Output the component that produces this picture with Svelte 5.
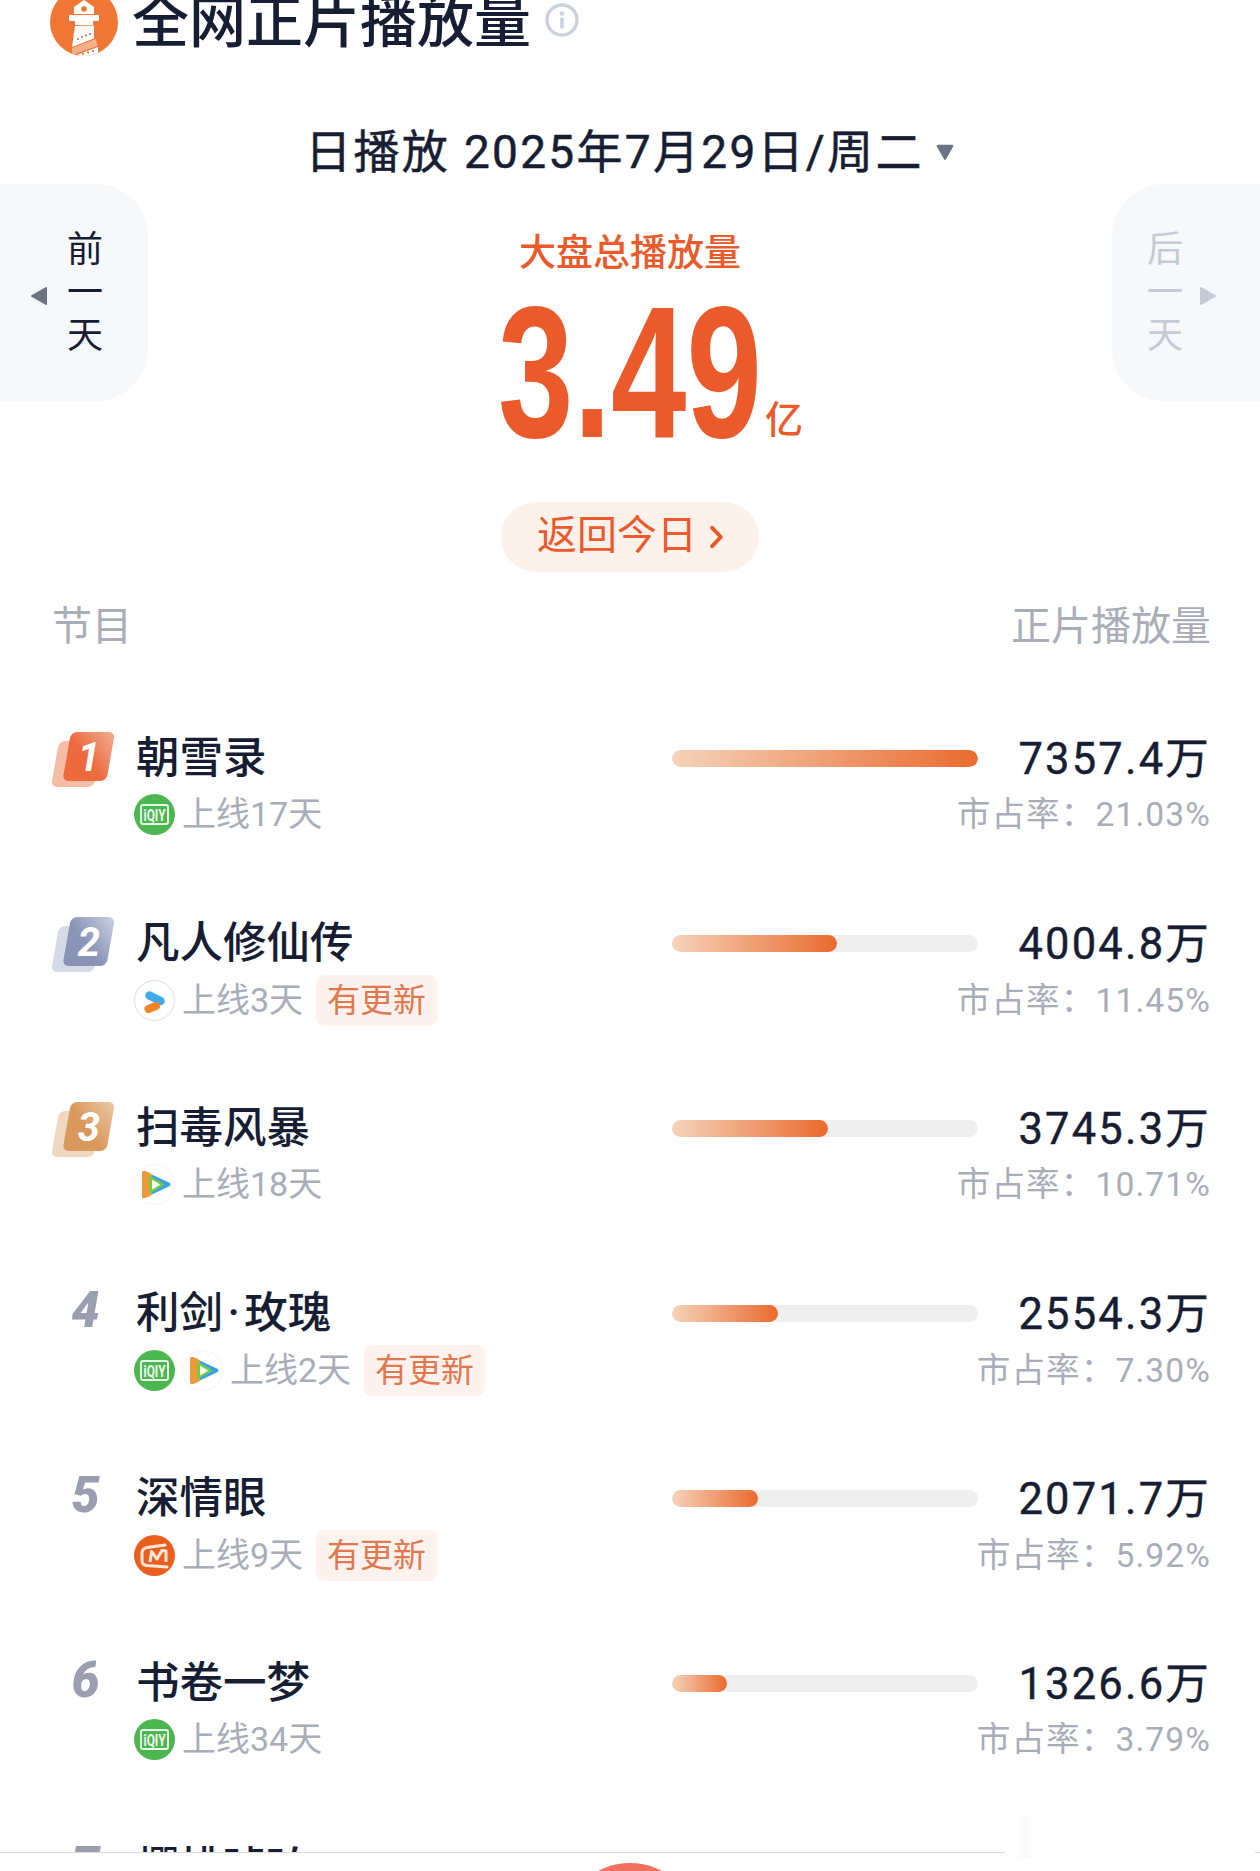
<script>
  const rows = [
    { name: '朝雪录', days: '上线17天', pf: ['iq'], tag: false, pct: 100, val: '7357.4万', share: '21.03%' },
    { name: '凡人修仙传', days: '上线3天', pf: ['yk'], tag: true, pct: 54, val: '4004.8万', share: '11.45%' },
    { name: '扫毒风暴', days: '上线18天', pf: ['tx'], tag: false, pct: 51, val: '3745.3万', share: '10.71%' },
    { name: '利剑\u200A·\u200A玫瑰', days: '上线2天', pf: ['iq', 'tx'], tag: true, pct: 34.7, val: '2554.3万', share: '7.30%' },
    { name: '深情眼', days: '上线9天', pf: ['mg'], tag: true, pct: 28, val: '2071.7万', share: '5.92%' },
    { name: '书卷一梦', days: '上线34天', pf: ['iq'], tag: false, pct: 18, val: '1326.6万', share: '3.79%' },
    { name: '樱桃琥珀', days: '上线30天', pf: ['iq'], tag: false, pct: 15, val: '1200.0万', share: '3.40%' }
  ];
  const medals = [
    { a: '#ec6a3e', b: '#f2b097', back: '#f5bca6' },
    { a: '#8a94b6', b: '#cdd3e3', back: '#d6dae7' },
    { a: '#d9985c', b: '#eccaa6', back: '#f0d8c0' }
  ];
</script>

{#snippet platform(p)}
  <svg class="pf" viewBox="0 0 41 41">
    {#if p === 'iq'}
      <circle cx="20.5" cy="20.5" r="20.5" fill="#4cb751" />
      <path d="M9 11h23a2 2 0 0 1 2 2v15a2 2 0 0 1-2 2H9a2 2 0 0 1-2-2V13a2 2 0 0 1 2-2z" fill="none" stroke="#e9f6ea" stroke-width="2" />
      <text x="20.5" y="26.5" class="iqt" textLength="22" lengthAdjust="spacingAndGlyphs">iQIY</text>
    {:else if p === 'yk'}
      <circle cx="20.5" cy="20.5" r="20" fill="#fff" stroke="#dcdcdc" />
      <path d="M15.5 15.5l11 5.5" stroke="#41a9ee" stroke-width="8.5" stroke-linecap="round" fill="none" />
      <path d="M14.5 29l7.5-3" stroke="#ef8426" stroke-width="8" stroke-linecap="round" fill="none" />
    {:else if p === 'tx'}
      <circle cx="20.5" cy="20.5" r="20" fill="#fff" stroke="#f3f3f3" />
      <path d="M10 9l24.5 11.5L10 32z" fill="#3aa2e2" stroke="#3aa2e2" stroke-width="4" stroke-linejoin="round" />
      <path d="M10 9q5 1 6 3v17q-1 2-6 3z" fill="#ee9a3a" stroke="#ee9a3a" stroke-width="4" stroke-linejoin="round" />
      <path d="M15.5 12l14.5 8.5L15.5 29z" fill="#78c84a" stroke="#78c84a" stroke-linejoin="round" />
      <path d="M18.5 16.5l7 4-7 4.5z" fill="#f6fbea" stroke="#f6fbea" stroke-linejoin="round" />
    {:else}
      <circle cx="20.5" cy="20.5" r="20.5" fill="#ea5f20" />
      <path d="M31 10L13 12.5Q8 13.5 8 18.5V26Q8 30 13 30.5L33 32" fill="none" stroke="#fbe7d8" stroke-width="3" stroke-linecap="round" />
      <path d="M16 27L17.5 16.5L23 24L28 15.5L32 16V27" fill="none" stroke="#fbe7d8" stroke-width="3" stroke-linejoin="round" />
    {/if}
  </svg>
{/snippet}

<div class="page">
  <header class="head">
    <svg class="logo" viewBox="0 0 68 68">
      <defs><clipPath id="lc"><circle cx="34" cy="34" r="34" /></clipPath></defs>
      <g clip-path="url(#lc)">
        <rect width="68" height="68" fill="#ef7735" />
        <path d="M24 26V19l10-7 10 7v7z" fill="#fff" />
        <circle cx="34" cy="21" r="2.8" fill="#ef7735" />
        <rect x="19" y="27" width="30" height="6" rx="1" fill="#fff" />
        <rect x="25" y="33" width="18" height="4" fill="#fff" />
        <path d="M25 38l19-0.5v13L22 59z" fill="#fff" />
        <path d="M22 60l24-9 1.5 7L22 67z" fill="#f3b08a" />
        <path d="M24 68l24-9 0 9z" fill="#fff" />
        <g fill="#a8785c"><circle cx="28" cy="51" r="1.1" /><circle cx="32" cy="49" r="1.1" /><circle cx="36" cy="47.5" r="1.1" /><circle cx="40" cy="46" r="1.1" /><circle cx="33" cy="66" r="1.1" /><circle cx="38" cy="64.5" r="1.1" /><circle cx="43" cy="63" r="1.1" /></g>
      </g>
    </svg>
    <h1>全网正片播放量</h1>
    <svg class="info" viewBox="0 0 34 34">
      <circle cx="17" cy="17" r="15" fill="none" stroke="#ccd1db" stroke-width="3.4" />
      <circle cx="17" cy="10.5" r="2.2" fill="#ccd1db" />
      <rect x="15.2" y="14.5" width="3.6" height="11" rx="1" fill="#ccd1db" />
    </svg>
  </header>

  <div class="date">
    <span>日播放 2025年7月29日/周二</span>
    <svg class="caret" viewBox="0 0 18 16"><path d="M2.5 2.5h13L9 14z" fill="#6b7484" stroke="#6b7484" stroke-width="2" stroke-linejoin="round" /></svg>
  </div>

  <section class="hero">
    <div class="nav prev">
      <svg class="arrow" viewBox="0 0 18 20"><path d="M16 2v16L2 10z" fill="#6b7484" stroke="#6b7484" stroke-width="2" stroke-linejoin="round" /></svg>
      <div class="vert"><span>前</span><span>一</span><span>天</span></div>
    </div>
    <div class="mid">
      <div class="label">大盘总播放量</div>
      <div class="total"><span class="digits">3.49</span><span class="unit">亿</span></div>
      <div class="back"><span class="backt">返回今日</span><svg viewBox="0 0 12 22"><path d="M2 2.5L10 11l-8 8.5" fill="none" stroke="#ea5a2b" stroke-width="3.6" stroke-linecap="round" stroke-linejoin="round" /></svg></div>
    </div>
    <div class="nav next">
      <div class="vert"><span>后</span><span>一</span><span>天</span></div>
      <svg class="arrow" viewBox="0 0 18 20"><path d="M2 2v16l14-8z" fill="#c5cbd6" stroke="#c5cbd6" stroke-width="2" stroke-linejoin="round" /></svg>
    </div>
  </section>

  <div class="thead"><span>节目</span><span>正片播放量</span></div>

  <div class="list">
    {#each rows as r, i}
      <div class="row">
        <div class="rank">
          {#if i < 3}
            <svg class="medal" viewBox="0 0 70 60">
              <defs>
                <linearGradient id="m{i}" x1="0" y1="1" x2="1" y2="0">
                  <stop offset="0" stop-color={medals[i].a} /><stop offset="0.45" stop-color={medals[i].a} /><stop offset="1" stop-color={medals[i].b} />
                </linearGradient>
              </defs>
              <rect x="12" y="11" width="43" height="46" rx="6" fill={medals[i].back} transform="skewX(-10)" />
              <rect x="22.4" y="2" width="44" height="49" rx="6" fill="url(#m{i})" transform="skewX(-10)" />
              <text x="40" y="41" class="mnum">{i + 1}</text>
            </svg>
          {:else}
            <span class="plain">{i + 1}</span>
          {/if}
        </div>
        <div class="name">{r.name}</div>
        <div class="bar"><div class="fill" style="width:{r.pct}%"></div></div>
        <div class="val">{r.val}</div>
        <div class="sub" class:tagged={r.tag}>
          {#each r.pf as p}{@render platform(p)}{/each}
          <span class="days">{r.days}</span>
          {#if r.tag}<span class="tag">有更新</span>{/if}
        </div>
        <div class="share" class:tagged={r.tag}>市占率：{r.share}</div>
      </div>
    {/each}
  </div>

  <div class="mark"></div>
  <footer class="foot"><div class="fab"></div></footer>
</div>

<style>
  :global(body) { margin: 0; background: #fff; }
  .page {
    position: relative;
    width: 1260px;
    height: 1871px;
    overflow: hidden;
    background: #fff;
    color: #171d33;
    font-family: Roboto, "Noto Sans CJK SC", sans-serif;
  }
  .head {
    display: flex;
    align-items: center;
    height: 88px;
    margin-top: -22px;
    padding-left: 50px;
  }
  .logo { width: 68px; height: 68px; flex: none; }
  h1 {
    margin: 2px 0 0 14px;
    font-size: 57px;
    line-height: 60px;
    font-weight: 500;
    white-space: nowrap;
  }
  .info { width: 34px; height: 34px; margin: -4px 0 0 14px; }
  .date {
    display: flex;
    align-items: center;
    justify-content: center;
    height: 60px;
    margin-top: 56px;
    font-size: 46px;
    line-height: 60px;
    font-weight: 400;
    letter-spacing: 2.3px;
    -webkit-text-stroke: 0.5px #171d33;
    white-space: nowrap;
  }
  .caret { width: 20px; height: 18px; margin-left: 11px; }
  .hero {
    display: grid;
    grid-template-columns: 148px 1fr 148px;
    align-items: start;
    margin-top: 2px;
  }
  .nav {
    display: flex;
    align-items: center;
    height: 217px;
    background: #f6f8fa;
    box-sizing: border-box;
  }
  .prev { border-radius: 0 52px 52px 0; padding-left: 30px; gap: 19px; }
  .next { border-radius: 52px 0 0 52px; padding-left: 35px; gap: 16px; color: #c5cbd6; }
  .arrow { width: 18px; height: 20px; flex: none; margin-top: 7px; }
  .vert { display: flex; flex-direction: column; align-items: center; margin-top: 2px; font-size: 36px; line-height: 43px; }
  .mid { display: flex; flex-direction: column; align-items: center; padding-top: 48px; }
  .label { font-size: 37px; line-height: 44px; font-weight: 500; color: #ea5a2b; white-space: nowrap; }
  .total {
    display: flex;
    align-items: flex-end;
    height: 135px;
    margin: 28px 0 0 44px;
    color: #ea5a2b;
  }
  .digits {
    display: block;
    width: 257px;
    font-family: "Liberation Sans", Roboto, sans-serif;
    font-size: 187px;
    line-height: 135px;
    font-weight: 700;
    transform: translate(-3px, 1px) scaleX(0.725);
    transform-origin: left center;
    white-space: nowrap;
  }
  .unit { font-size: 38px; line-height: 44px; margin: 0 0 -3px 7px; font-weight: 500; }
  .back {
    display: flex;
    align-items: center;
    justify-content: center;
    gap: 13px;
    width: 258px;
    height: 70px;
    margin-top: 63px;
    border-radius: 35px;
    background: #fdf1ec;
    color: #ea5a2b;
    font-size: 40px;
  }
  .backt { line-height: 64px; height: 64px; margin-top: -3px; }
  .back svg { width: 13px; height: 24px; }
  .thead {
    display: flex;
    justify-content: space-between;
    height: 50px;
    margin-top: 30px;
    padding: 0 49px 0 52px;
    font-size: 40px;
    line-height: 50px;
    color: #a9adb8;
  }
  .list { margin-top: 80.5px; }
  .row {
    display: grid;
    grid-template-columns: 84px 536px 306px 1fr;
    grid-template-rows: 52px auto;
    row-gap: 9px;
    align-items: center;
    height: 185px;
    align-content: start;
    box-sizing: border-box;
    padding: 0 49px 0 52px;
  }
  .rank { grid-row: 1; grid-column: 1; height: 52px; position: relative; }
  .medal { display: block; width: 70px; height: 60px; margin: -3px 0 0 -3px; }
  .mnum {
    font: italic 700 40px Roboto, sans-serif;
    fill: #fff;
    text-anchor: middle;
  }
  .plain {
    display: block;
    width: 66px;
    padding-left: 1px;
    box-sizing: border-box;
    text-align: center;
    font-size: 50px;
    line-height: 44px;
    font-weight: 900;
    font-style: italic;
    color: #9a9eae;
  }
  .name { grid-row: 1; grid-column: 2; font-size: 43.5px; line-height: 52px; font-weight: 500; white-space: nowrap; }
  .bar { grid-row: 1; grid-column: 3; height: 17px; border-radius: 9px; background: #efefef; overflow: hidden; }
  .fill { height: 100%; border-radius: 9px; background: linear-gradient(90deg, #f5d3ba, #ea6a2e); }
  .val {
    grid-row: 1;
    grid-column: 4;
    position: relative;
    top: 1px;
    text-align: right;
    font-size: 43.5px;
    line-height: 52px;
    font-weight: 400;
    letter-spacing: 2.2px;
    -webkit-text-stroke: 0.4px #171d33;
    white-space: nowrap;
  }
  .sub {
    grid-row: 2;
    grid-column: 2 / 4;
    display: flex;
    align-items: center;
    gap: 7px;
    height: 41px;
    margin-left: -2px;
  }
  .pf { width: 41px; height: 41px; flex: none; }
  .iqt { font: 700 16px Roboto, sans-serif; fill: #eef8ef; text-anchor: middle; }
  .days { font-size: 34px; line-height: 41px; color: #a9adb8; white-space: nowrap; }
  .tag {
    margin-left: 6px;
    padding: 0 11px;
    height: 51px;
    flex: none;
    border-radius: 8px;
    background: #fdf2ed;
    color: #e0794f;
    font-size: 33px;
    line-height: 51px;
  }
  .tagged { position: relative; top: 1px; }
  .share {
    grid-row: 2;
    grid-column: 3 / 5;
    text-align: right;
    font-size: 33.6px;
    line-height: 41px;
    color: #a9adb8;
    letter-spacing: 1.1px;
    white-space: nowrap;
  }
  .mark {
    position: absolute;
    left: 1005px;
    top: 1817px;
    width: 250px;
    height: 41px;
    background:
      linear-gradient(90deg, transparent 12px, rgba(0,0,0,.025) 20px, transparent 28px, transparent),
      #fff;
    z-index: 2;
  }
  .foot {
    position: absolute;
    left: 0;
    right: 0;
    top: 1852px;
    height: 19px;
    box-sizing: border-box;
    border-top: 1px solid #dcdcdc;
    background: #fff;
    overflow: hidden;
    z-index: 1;
  }
  .fab {
    width: 136px;
    height: 136px;
    margin: 10px auto 0;
    border-radius: 50%;
    background: linear-gradient(180deg, #f0705f, #ee6f66);
  }
</style>
